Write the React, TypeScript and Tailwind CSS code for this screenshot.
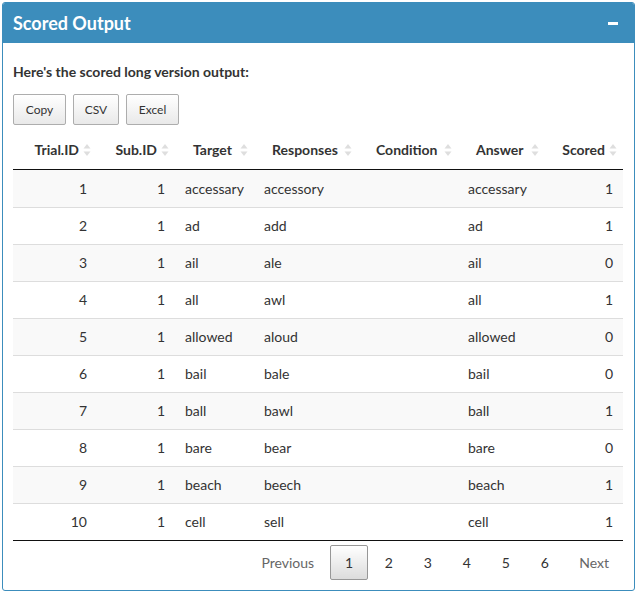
import React from "react";

type Row = {
  trial: number,
  sub: number,
  target: string,
  response: string,
  answer: string,
  scored: number,
}

const rows: Row[] = [
  { trial: 1, sub: 1, target: "accessary", response: "accessory", answer: "accessary", scored: 1 },
  { trial: 2, sub: 1, target: "ad", response: "add", answer: "ad", scored: 1 },
  { trial: 3, sub: 1, target: "ail", response: "ale", answer: "ail", scored: 0 },
  { trial: 4, sub: 1, target: "all", response: "awl", answer: "all", scored: 1 },
  { trial: 5, sub: 1, target: "allowed", response: "aloud", answer: "allowed", scored: 0 },
  { trial: 6, sub: 1, target: "bail", response: "bale", answer: "bail", scored: 0 },
  { trial: 7, sub: 1, target: "ball", response: "bawl", answer: "ball", scored: 1 },
  { trial: 8, sub: 1, target: "bare", response: "bear", answer: "bare", scored: 0 },
  { trial: 9, sub: 1, target: "beach", response: "beech", answer: "beach", scored: 1 },
  { trial: 10, sub: 1, target: "cell", response: "sell", answer: "cell", scored: 1 },
]

const headers = [
  { label: "Trial.ID", right: true },
  { label: "Sub.ID", right: true },
  { label: "Target", right: false },
  { label: "Responses", right: false },
  { label: "Condition", right: false },
  { label: "Answer", right: false },
  { label: "Scored", right: true },
]

const buttons = [
  { label: "Copy", w: "w-[53px]" },
  { label: "CSV", w: "w-[46px]" },
  { label: "Excel", w: "w-[53px]" },
]

const cols = "grid grid-cols-[84px_78px_79px_104px_100px_87px_78px]";

function SortIcon() {
  return (
    <svg width="8" height="14" viewBox="0 0 8 14" className="absolute right-[6px] top-[9px]">
      <path d="M4 1 L7.5 5.5 L0.5 5.5 Z" fill="#dedede" />
      <path d="M4 13 L7.5 8.5 L0.5 8.5 Z" fill="#dedede" />
    </svg>
  );
}

const App: React.FC = () => {
  return (
    <div className="bg-white w-[637px] h-[592px] pt-[2px] pl-[2px] text-[14px] text-[#333]" style={{ fontFamily: "Lato, 'Liberation Sans', sans-serif" }}>
      <div className="w-[633px] h-[589px] border border-[#3c8dbc] rounded-[3px] flex flex-col overflow-hidden">
        {/* header */}
        <div className="h-[40px] bg-[#3c8dbc] flex items-center justify-between px-[10px] shrink-0">
          <span className="text-white text-[18px] font-bold">Scored Output</span>
          <span className="w-[10px] h-[3px] bg-white mr-[6px]"></span>
        </div>

        <div className="p-[10px] flex flex-col">
          <div className="font-bold mt-[9px] leading-[20px]">Here's the scored long version output:</div>

          <div className="flex gap-[7px] mt-[12px]">
            {buttons.map((b) => (
              <button key={b.label} className={`h-[31px] ${b.w} text-[12px] text-[#333] border border-[#adadad] rounded-[2px] bg-gradient-to-b from-white to-[#e9e9e9]`}>
                {b.label}
              </button>
            ))}
          </div>

          <div className="mt-[9px] w-[610px]">
            <div className={`${cols} h-[36px] border-b border-[#111] font-bold`}>
              {headers.map((h) => (
                <div key={h.label} className={`relative flex items-start pt-[6px] leading-[20px] px-[18px] ${h.right ? "justify-end" : "justify-start"}`}>
                  {h.label}
                  <SortIcon />
                </div>
              ))}
            </div>

            {rows.map((r, i) => (
              <div key={r.trial} className={`${cols} h-[37px] ${i > 0 ? "border-t border-[#ddd]" : ""} ${i % 2 === 0 ? "bg-[#f9f9f9]" : "bg-white"}`}>
                <div className="flex items-center justify-end pr-[10px] pb-[1px]">{r.trial}</div>
                <div className="flex items-center justify-end pr-[10px] pb-[1px]">{r.sub}</div>
                <div className="flex items-center pl-[10px] pb-[1px]">{r.target}</div>
                <div className="flex items-center pl-[10px] pb-[1px]">{r.response}</div>
                <div className="flex items-center pl-[10px]"></div>
                <div className="flex items-center pl-[10px] pb-[1px]">{r.answer}</div>
                <div className="flex items-center justify-end pr-[10px] pb-[1px]">{r.scored}</div>
              </div>
            ))}
            <div className="border-t border-[#111]"></div>

            <div className="flex justify-end mt-[4px] gap-[2px]">
              <span className="h-[35px] px-[14px] flex items-center text-[#666]">Previous</span>
              <span className="h-[35px] min-w-[37px] px-[14px] flex items-center justify-center border border-[#979797] rounded-[2px] bg-gradient-to-b from-white to-[#dcdcdc]">1</span>
              {[2, 3, 4, 5, 6].map((n) => (
                <span key={n} className="h-[35px] min-w-[37px] flex items-center justify-center">{n}</span>
              ))}
              <span className="h-[35px] px-[14px] flex items-center text-[#666]">Next</span>
            </div>
          </div>
        </div>
      </div>
    </div>
  );
}

export default App;
